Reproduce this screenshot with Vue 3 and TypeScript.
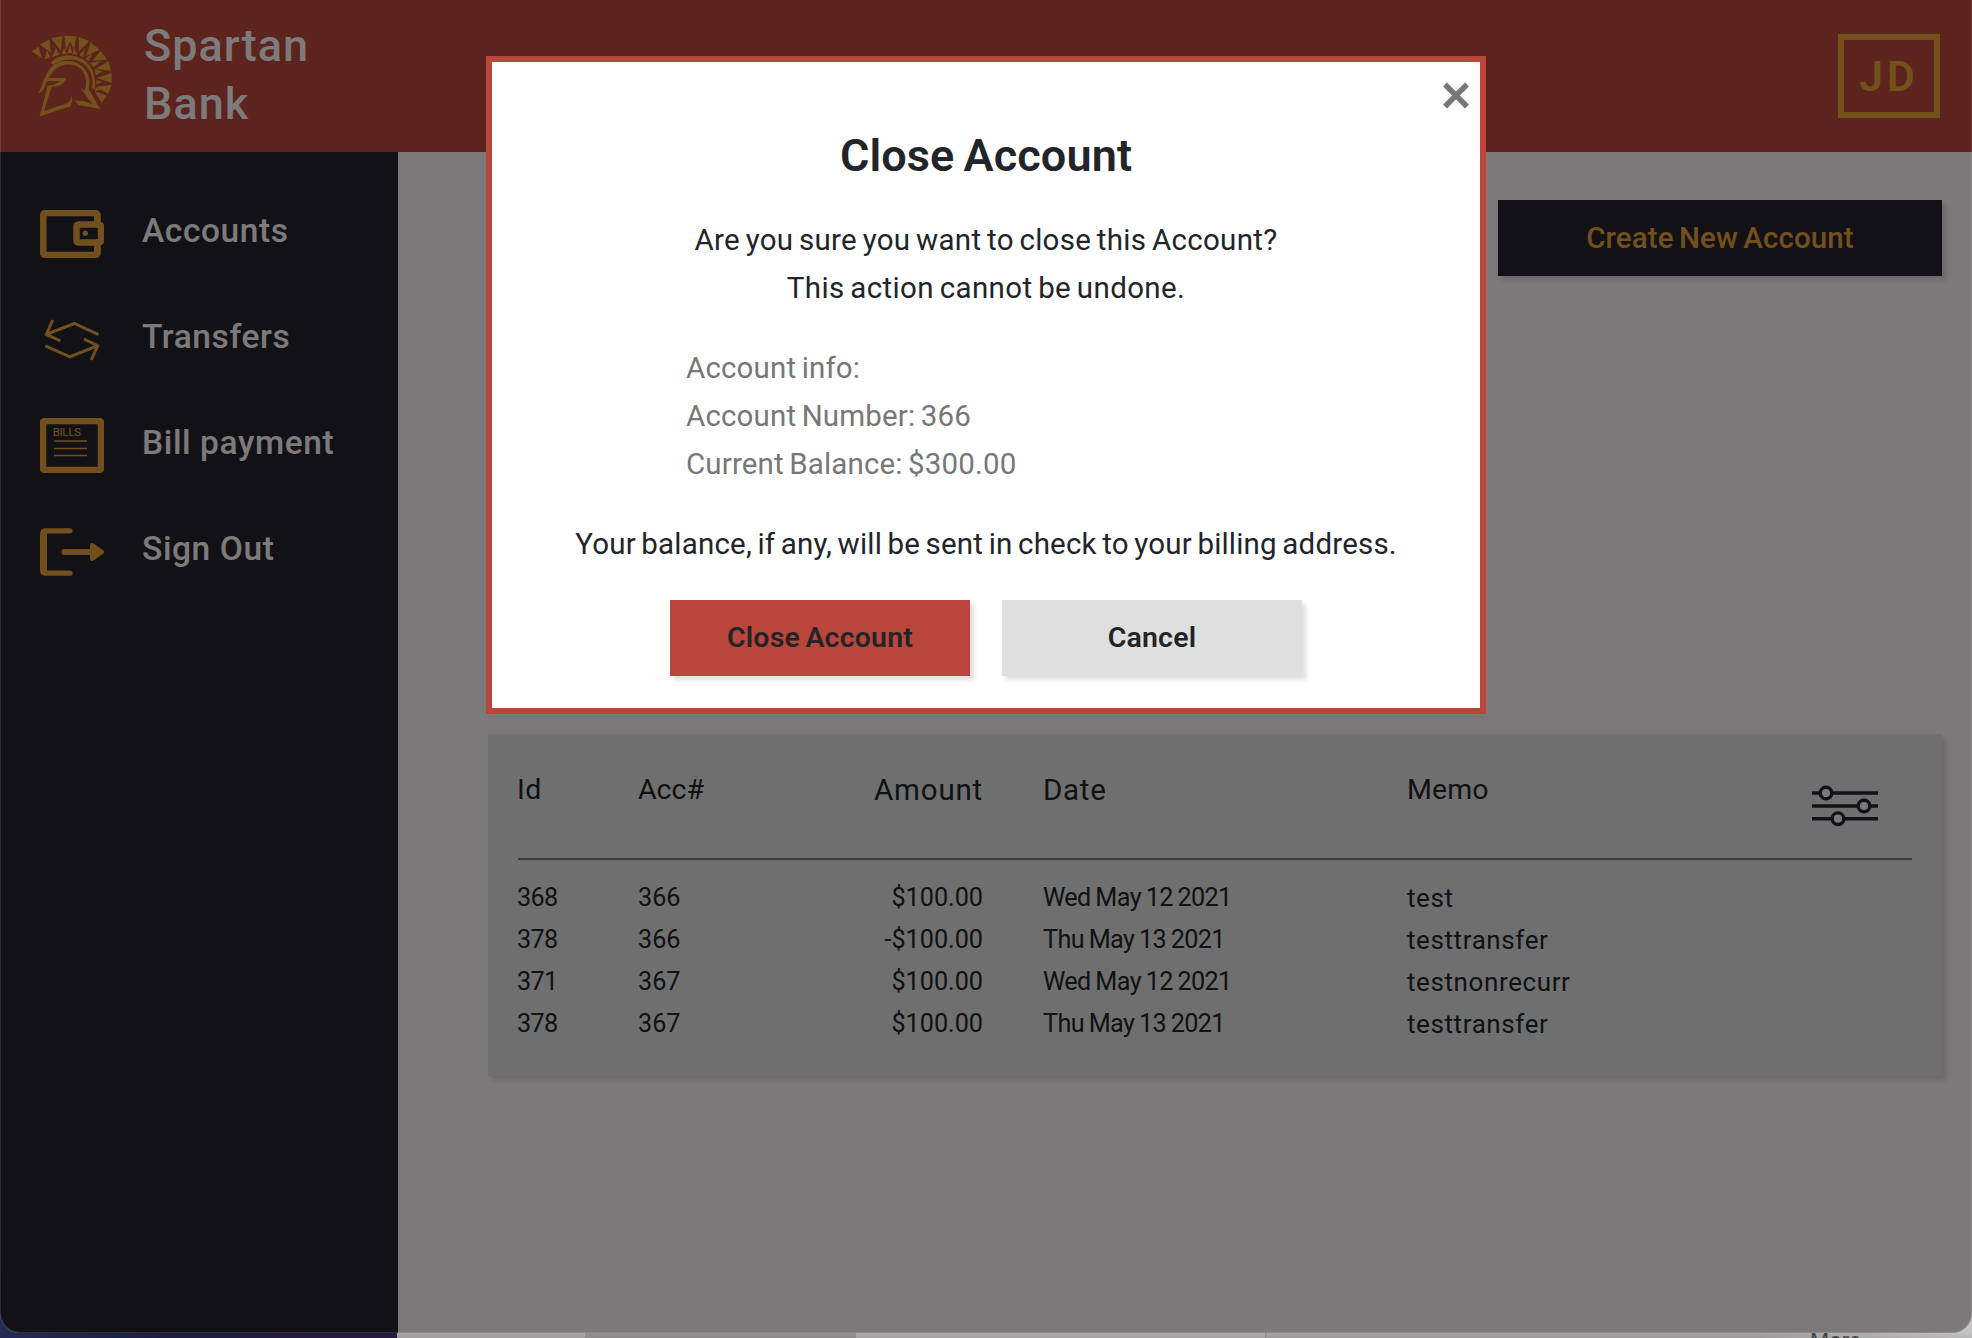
<script setup lang="ts">
interface NavItem {
  label: string
  icon: 'wallet' | 'transfer' | 'bills' | 'signout'
}

interface Transaction {
  id: number
  account: number
  amount: string
  date: string
  memo: string
}

const navItems: NavItem[] = [
  { label: 'Accounts', icon: 'wallet' },
  { label: 'Transfers', icon: 'transfer' },
  { label: 'Bill payment', icon: 'bills' },
  { label: 'Sign Out', icon: 'signout' },
]

const transactions: Transaction[] = [
  { id: 368, account: 366, amount: '$100.00', date: 'Wed May 12 2021', memo: 'test' },
  { id: 378, account: 366, amount: '-$100.00', date: 'Thu May 13 2021', memo: 'testtransfer' },
  { id: 371, account: 367, amount: '$100.00', date: 'Wed May 12 2021', memo: 'testnonrecurr' },
  { id: 378, account: 367, amount: '$100.00', date: 'Thu May 13 2021', memo: 'testtransfer' },
]

/* Crest of the helmet: long spikes point inwards, short ones fill the gaps. */
const crest: string[] = [
  '96,154 115,140 127,176',
  '120,134 148,118 153,158',
  '153,115 187,108 183,152',
  '236,110 268,123 237,154',
  '272,126 298,149 259,168',
  '302,153 322,179 277,182',
  '325,184 333,212 287,207',
  '335,219 335,248 290,234',
  '334,255 325,282 290,260',
  '320,287 306,309 284,274',
  '134,178 141,150 151,172',
  '156,171 168,144 178,164',
  '185,163 192,144 200,161',
  '217,161 223,144 231,164',
  '238,166 254,147 250,172',
  '256,176 277,160 266,184',
  '270,188 304,183 280,202',
  '283,208 307,214 288,226',
  '289,239 307,246 289,253',
  '288,262 304,268 284,274',
]
</script>

<template>
  <div class="desktop">
    <div class="window">
      <header class="topbar">
        <div class="brand">
          <svg class="logo" viewBox="93 105 246 246">
            <polygon v-for="(p, i) in crest" :key="i" :points="p" />
            <path d="M193 107L229 109L222 150L210 124L198 150Z" />
            <path d="M202 160L210 136L217 160Z" />
            <path d="M152 188C178 158 240 158 268 196C284 216 287 242 284 268L276 264C280 240 276 220 262 202C238 172 192 172 160 194Z" />
            <path d="M115 278C126 262 134 222 155 200C180 176 224 176 248 200C268 220 272 246 266 266L300 327L236 315L223 301L250 303L278 313L242 266L254 272C262 248 260 224 242 206C220 188 184 190 166 208C156 218 149 228 146 234L198 234C194 248 184 260 160 260L155 260L132 333L204 309C210 304 214 296 215 283L217 302L211 319L119 349L143 257C158 256 174 250 180 243L141 243C136 256 132 268 124 277Z" fill-rule="evenodd" />
          </svg>
          <div class="brand-name">
            <span>Spartan</span>
            <span>Bank</span>
          </div>
        </div>
        <div class="avatar"><span>JD</span></div>
      </header>

      <div class="body">
        <nav class="sidebar">
          <a v-for="item in navItems" :key="item.label" class="nav-item">
            <span class="nav-icon">
              <svg v-if="item.icon === 'wallet'" width="64" height="48" viewBox="0 0 64 48">
                <rect x="3.3" y="3" width="54" height="42" rx="2" class="thick" />
                <rect x="51" y="12" width="13" height="24" fill="#24222c" />
                <path d="M57.3 3V15M57.3 33V45" class="thick" />
                <rect x="36.5" y="14.5" width="24.5" height="18" rx="2" class="thick" />
                <circle cx="45.3" cy="23.3" r="2.7" class="solid" />
              </svg>
              <svg v-else-if="item.icon === 'transfer'" width="64" height="48" viewBox="0 0 64 48">
                <path d="M12.7 4L6.3 18.4L20.5 25M6.3 18.4L34.3 7.5L58.5 18.6" class="thin" />
                <path d="M51.3 44L57.7 29.6L44 23M57.7 29.6L29.9 40.8L5.3 29.8" class="thin" />
              </svg>
              <svg v-else-if="item.icon === 'bills'" class="bills-icon" width="64" height="55" viewBox="0 0 64 55">
                <rect x="3" y="3" width="58" height="49" rx="2" class="thick" />
                <text x="12.8" y="17.7" class="bills" textLength="28">BILLS</text>
                <path d="M14 23H47M14 30.5H47M14 37.5H47" class="rule" />
              </svg>
              <svg v-else width="64" height="48" viewBox="0 0 64 48">
                <path d="M30 0.2A2.5 2.5 0 0 1 30 5.4H7V42.6H30A2.5 2.5 0 0 1 30 47.8H5.5Q0 47.8 0 42V6Q0 0.2 5.5 0.2Z" class="solid" />
                <path d="M24.5 24H52" class="mid" />
                <path d="M52 17L62 24L52 31Z" class="solid head" />
              </svg>
            </span>
            <span class="nav-label">{{ item.label }}</span>
          </a>
        </nav>

        <main class="content">
          <div class="toolbar">
            <button class="btn create"><span>Create New Account</span></button>
          </div>

          <section class="card">
            <div class="row head-row">
              <span class="h-id">Id</span>
              <span>Acc#</span>
              <span class="num h-amount">Amount</span>
              <span class="h-date">Date</span>
              <span class="memo-head">
                <span class="h-memo">Memo</span>
                <svg class="filter" width="66" height="42" viewBox="0 0 66 42">
                  <path d="M0 8H66M0 21H66M0 33.7H66" />
                  <circle cx="14" cy="8" r="5.8" />
                  <circle cx="52" cy="21" r="5.8" />
                  <circle cx="26" cy="33.7" r="5.8" />
                </svg>
              </span>
            </div>
            <div v-for="(t, i) in transactions" :key="i" class="row data-row">
              <span class="id">{{ t.id }}</span>
              <span>{{ t.account }}</span>
              <span class="num">{{ t.amount }}</span>
              <span class="date">{{ t.date }}</span>
              <span class="memo">{{ t.memo }}</span>
            </div>
          </section>
        </main>
      </div>

      <div class="overlay">
        <div class="modal" role="dialog">
          <svg class="close" width="26" height="27" viewBox="0 0 26 27">
            <path d="M2 2.5L24 24.5M24 2.5L2 24.5" />
          </svg>
          <h1>Close Account</h1>
          <div class="question">
            <p>Are you sure you want to close this Account?</p>
            <p class="warning">This action cannot be undone.</p>
          </div>
          <div class="info">
            <p>Account info:</p>
            <p>Account Number: 366</p>
            <p>Current Balance: $300.00</p>
          </div>
          <p class="note">Your balance, if any, will be sent in check to your billing address.</p>
          <div class="actions">
            <button class="btn danger"><span>Close Account</span></button>
            <button class="btn cancel"><span>Cancel</span></button>
          </div>
        </div>
      </div>
    </div>

    <div class="behind">
      <span class="pane wall"></span>
      <span class="pane p1"></span>
      <span class="pane p2"></span>
      <span class="pane p3"></span>
      <span class="pane p4"><span class="more">More</span></span>
    </div>
  </div>
</template>

<style>
body {
  margin: 0;
  overflow: hidden;
}
</style>

<style scoped>
.desktop {
  position: relative;
  width: 1972px;
  height: 1338px;
  overflow: hidden;
  background: #a9a7a8;
  font-family: Roboto, "Noto Sans", sans-serif;
  color: #212529;
}
.window {
  position: relative;
  z-index: 1;
  display: flex;
  flex-direction: column;
  width: 1972px;
  height: 1333px;
  overflow: hidden;
  border-radius: 0 0 20px 20px;
  background: #f8f2f4;
}
.window::after {
  content: "";
  position: absolute;
  inset: 0;
  border: 1px solid rgba(255, 255, 255, 0.12);
  border-top: 0;
  border-radius: 0 0 20px 20px;
  pointer-events: none;
}
.topbar {
  display: flex;
  justify-content: space-between;
  align-items: center;
  height: 152px;
  padding: 0 32px 0 31px;
  box-sizing: border-box;
  background: #ba463a;
}
.brand {
  display: flex;
  align-items: center;
}
.logo {
  width: 82px;
  height: 82px;
  fill: #e5a336;
}
.brand-name {
  display: flex;
  flex-direction: column;
  margin: -2px 0 0 31px;
  font-size: 45px;
  line-height: 58px;
  font-weight: 500;
  letter-spacing: 1px;
  color: #f8f4f6;
}
.avatar {
  display: flex;
  align-items: center;
  justify-content: center;
  width: 102px;
  height: 84px;
  box-sizing: border-box;
  border: 6px solid #e5a336;
  color: #e5a336;
  font-size: 42.5px;
  font-weight: 600;
  letter-spacing: 4px;
}
.body {
  display: flex;
  flex: 1;
}
.sidebar {
  display: flex;
  flex-direction: column;
  width: 398px;
  padding-top: 29px;
  box-sizing: border-box;
  background: #24222c;
}
.nav-item {
  display: flex;
  align-items: center;
  height: 106px;
  padding-left: 40px;
}
.nav-icon {
  display: flex;
  width: 64px;
}
.nav-label {
  margin: -8px 0 0 38px;
  font-size: 33.5px;
  font-weight: 500;
  letter-spacing: 0.6px;
  color: #f8f4f6;
}
.bills-icon {
  margin-top: -1px;
}
.thick {
  fill: none;
  stroke: #e5a03a;
  stroke-width: 6.5;
}
.thin {
  fill: none;
  stroke: #e5a03a;
  stroke-width: 3;
}
.mid {
  stroke: #e5a03a;
  stroke-width: 6;
  stroke-linecap: round;
}
.solid {
  fill: #e5a03a;
}
.head {
  stroke: #e5a03a;
  stroke-width: 4;
  stroke-linejoin: round;
}
.rule {
  stroke: #e5a03a;
  stroke-width: 1.5;
}
.bills {
  fill: #e5a03a;
  font-size: 11.5px;
}
.content {
  flex: 1;
  display: flex;
  flex-direction: column;
  padding: 48px 30px 0 90px;
}
.toolbar {
  display: flex;
  justify-content: flex-end;
}
.btn {
  display: flex;
  align-items: center;
  justify-content: center;
  height: 76px;
  padding: 0 0 1px;
  border: 0;
  font-family: inherit;
  font-size: 28.5px;
  font-weight: 600;
  letter-spacing: 0.2px;
  word-spacing: -2px;
  color: #212529;
  box-shadow: 4px 4px 4px rgba(0, 0, 0, 0.12);
}
.create {
  width: 444px;
  background: #24222c;
  color: #e5a03a;
  font-size: 29.5px;
  font-weight: 500;
  letter-spacing: 0.1px;
}
.card {
  margin-top: 458px;
  height: 342px;
  padding: 0 30px;
  box-sizing: border-box;
  background: #dfdfdf;
  box-shadow: 4px 4px 4px rgba(0, 0, 0, 0.12);
}
.row {
  display: grid;
  grid-template-columns: 120px 120px 285px 364px 1fr;
}
.num {
  padding-right: 60px;
  text-align: right;
}
.head-row {
  height: 126px;
  padding-top: 32px;
  box-sizing: border-box;
  border-bottom: 2px solid #777;
  margin-bottom: 17px;
  font-size: 28.5px;
  line-height: 48px;
}
.h-id {
  letter-spacing: 0.6px;
  text-indent: -1px;
}
.h-amount {
  font-size: 29.5px;
  letter-spacing: 0.8px;
}
.h-date {
  font-size: 29.5px;
  letter-spacing: 0.7px;
}
.h-memo {
  letter-spacing: 0.1px;
}
.memo-head {
  display: flex;
  justify-content: space-between;
  align-items: flex-start;
}
.filter {
  margin: 19px 34px 0 0;
  stroke: #24222c;
  stroke-width: 3.4;
  fill: #f8f2f4;
}
.data-row {
  font-size: 25.2px;
  line-height: 42px;
}
.id {
  letter-spacing: -0.7px;
  text-indent: -1px;
}
.date {
  letter-spacing: -0.6px;
  word-spacing: -1px;
}
.memo {
  font-size: 26px;
  letter-spacing: 0.6px;
}
.overlay {
  position: absolute;
  inset: 0;
  background: rgba(0, 0, 0, 0.5);
}
.modal {
  position: relative;
  display: flex;
  flex-direction: column;
  align-items: center;
  width: 1000px;
  height: 658px;
  margin: 56px 0 0 486px;
  box-sizing: border-box;
  border: 6px solid #ba463b;
  background: #fff;
  font-size: 29.5px;
  line-height: 48px;
}
.close {
  position: absolute;
  top: 20px;
  right: 11px;
  stroke: #777;
  stroke-width: 5.4;
}
h1 {
  margin: 68px 0 34px;
  font-size: 45px;
  line-height: 52px;
  font-weight: 600;
  letter-spacing: 0.1px;
  word-spacing: -2px;
}
p {
  margin: 0;
  word-spacing: -2px;
}
.question {
  text-align: center;
  letter-spacing: 0.3px;
}
.warning {
  letter-spacing: 0.38px;
}
.info {
  width: 600px;
  margin: 32px 0;
  letter-spacing: 0.15px;
  color: #777;
}
.note {
  letter-spacing: 0.19px;
}
.actions {
  display: flex;
  gap: 32px;
  margin-top: 32px;
}
.actions .btn {
  width: 300px;
}
.danger {
  background: #ba463b;
}
.cancel {
  background: #dfdfdf;
}
.behind {
  position: absolute;
  left: 0;
  right: 0;
  bottom: 0;
  display: flex;
  height: 26px;
}
.pane {
  box-shadow: inset 0 -6px 4px -3px rgba(0, 0, 0, 0.06);
}
.wall {
  width: 397px;
  background: linear-gradient(90deg, #242c5a, #1f2146 40%, #2c1b42);
}
.p1 {
  width: 188px;
  background: #a9a8a9;
}
.p2 {
  width: 271px;
  background: #969394;
}
.p3 {
  width: 409px;
  background: #adadae;
}
.p4 {
  flex: 1;
  overflow: hidden;
  border-left: 1px solid #8c8c8c;
  background: linear-gradient(90deg, #a5a5a5 70%, #c4c4c4);
}
.more {
  display: block;
  margin: 16px 0 0 544px;
  font-size: 22px;
  line-height: 26px;
  color: #444;
}
</style>
